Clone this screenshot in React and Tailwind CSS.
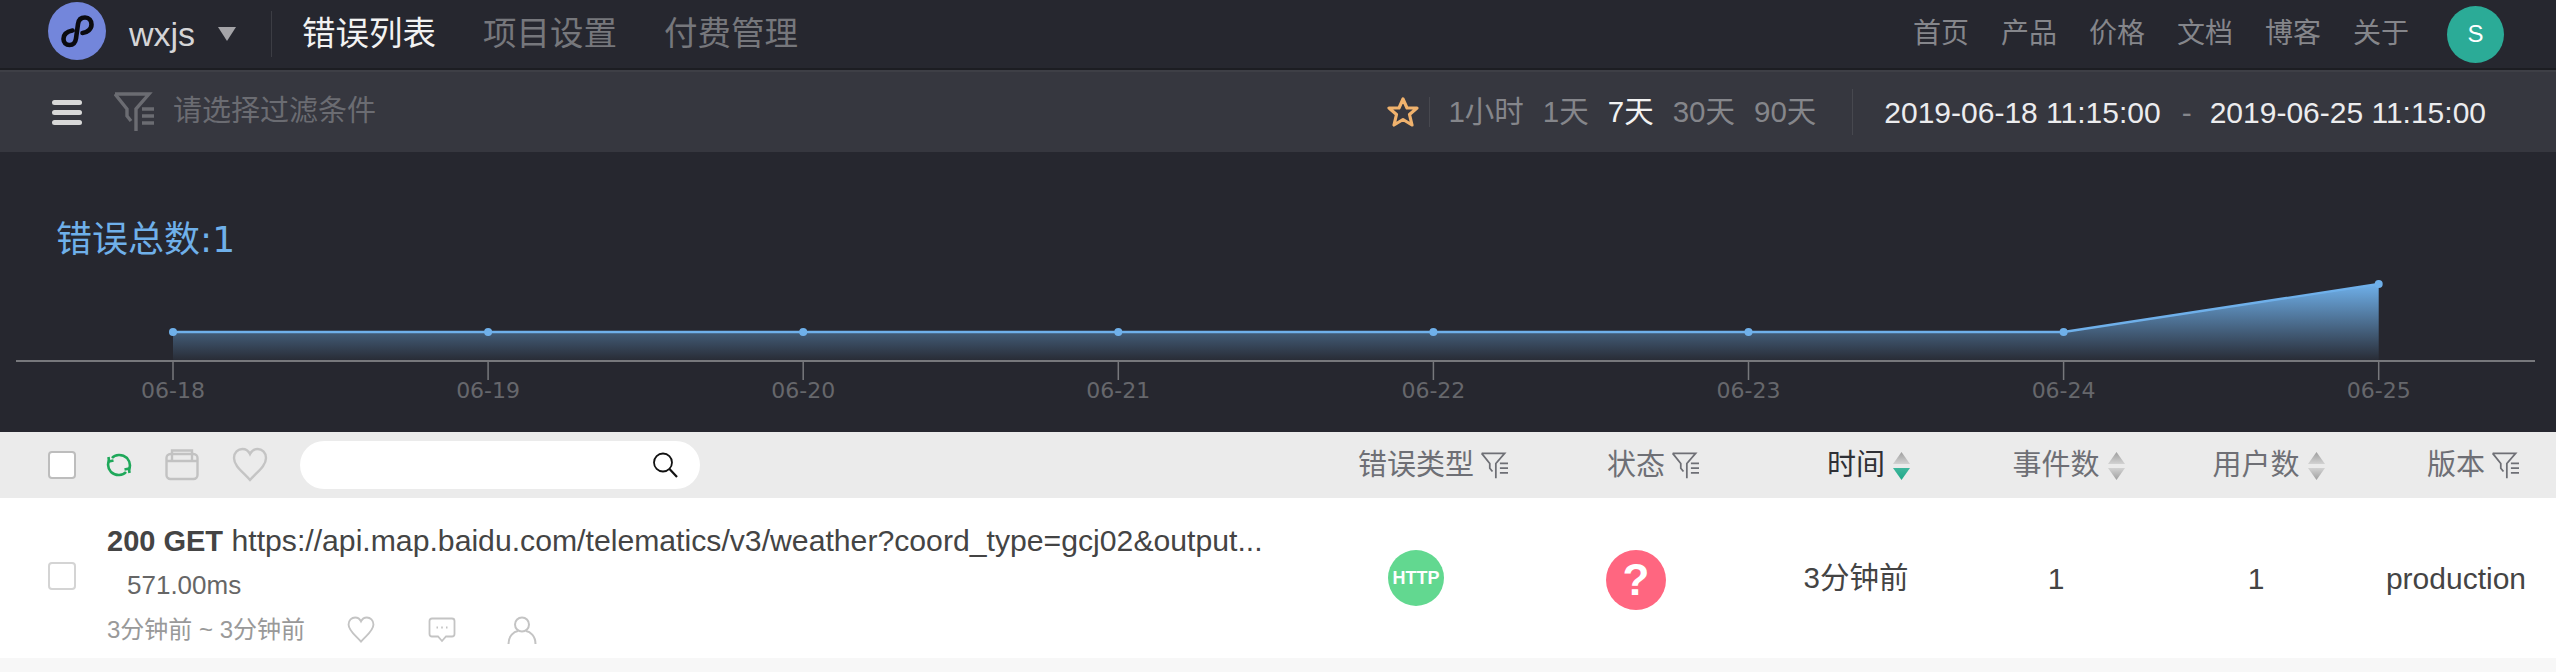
import React from "react";

const SANS = "font-['Liberation_Sans','Noto_Sans_CJK_SC',sans-serif]";
const TICKS = ["06-18", "06-19", "06-20", "06-21", "06-22", "06-23", "06-24", "06-25"];
const tickX = (i) => 173 + i * 315.1;

function MiniLogo() {
  return (
    <svg width="58" height="58" viewBox="0 0 58 58" className="block">
      <circle cx="29" cy="29" r="29" fill="#7386db" />
      <path d="M24.5 28.5 C19 29.5 15.5 32.5 15.5 37 C15.5 40.5 18 43 21.5 43 C25.5 43 27.5 40 28 36.5 L30 22 C30.5 18 33 15.5 37 15.5 C41 15.5 43.5 18.5 43.5 22.5 C43.5 27 39.5 30.5 34.5 31" fill="none" stroke="#0b0b10" strokeWidth="4.6" strokeLinecap="round" />
    </svg>
  );
}

function FilterIcon({ size = 40, color = "#6b6c72", stroke = 3.4 }) {
  return (
    <svg width={size} height={size} viewBox="0 0 40 40" className="block" fill="none" stroke={color} strokeWidth={stroke}>
      <path d="M1 2 H35 L22 17 V39" />
      <path d="M1 2 L13 17 V24 L17 29" />
      <path d="M28 17 H40 M28 24 H40 M28 31 H40" />
    </svg>
  );
}

function SortIcon({ active }) {
  const id = active ? "sortActive" : "sortIdle";
  return (
    <svg width="19" height="28" viewBox="0 0 19 28" className="block">
      <defs>
        <linearGradient id={`${id}Up`} x1="0" y1="0" x2="0" y2="1">
          <stop offset="0" stopColor="#9f9f9f" />
          <stop offset="1" stopColor="#d2d2d2" />
        </linearGradient>
        <linearGradient id={`${id}Down`} x1="0" y1="0" x2="0" y2="1">
          <stop offset="0" stopColor={active ? "#3fb69c" : "#d2d2d2"} />
          <stop offset="1" stopColor={active ? "#1fa888" : "#9f9f9f"} />
        </linearGradient>
      </defs>
      <path d="M9.5 0 L18 12 H1 Z" fill={`url(#${id}Up)`} />
      <path d="M9.5 28 L18 16 H1 Z" fill={`url(#${id}Down)`} />
    </svg>
  );
}

function Heart({ size, color = "#c4c4c4" }) {
  return (
    <svg width={size} height={size} viewBox="0 0 36 36" className="block" fill="none" stroke={color} strokeWidth="2.4">
      <path d="M18 33 C11 25 2 19 2 11 C2 5.5 6 2 10.5 2 C13.5 2 16.5 4 18 7 C19.5 4 22.5 2 25.5 2 C30 2 34 5.5 34 11 C34 19 25 25 18 33 Z" />
    </svg>
  );
}

function HeaderCell({ label, filter, sort, active, className = "" }) {
  return (
    <div className={`w-[200px] flex justify-center ${className}`}>
      <div className={`relative text-[29px] leading-none ${active ? "text-[#2f3036]" : "text-[#6e6f75]"}`}>
        {label}
        {filter && (
          <span className="absolute left-full top-[1px] ml-[7px]">
            <FilterIcon size={27} color="#6e6f75" stroke={2.6} />
          </span>
        )}
        {sort && (
          <span className="absolute left-full top-[1px] ml-[7px]">
            <SortIcon active={active} />
          </span>
        )}
      </div>
    </div>
  );
}

function TopNav() {
  return (
    <div className="h-[68px] bg-[#26272f] flex items-center">
      <div className="ml-[48px] -mt-[6px]"><MiniLogo /></div>
      <span className="ml-[23px] text-[34px] text-[#d5d5d7]">wxjs</span>
      <svg width="18" height="14" viewBox="0 0 18 14" className="ml-[23px]"><path d="M0 0 H18 L9 14 Z" fill="#a4a4a8" /></svg>
      <div className="ml-[35px] w-px h-[46px] bg-[#3c3d44]" />
      <span className="ml-[30px] text-[33.5px] text-[#f2f2f2]">错误列表</span>
      <span className="ml-[47px] text-[33.5px] text-[#76777c]">项目设置</span>
      <span className="ml-[47px] text-[33.5px] text-[#76777c]">付费管理</span>
      <div className="ml-auto flex items-center gap-[32px] text-[28px] text-[#85868b]">
        <span>首页</span>
        <span>产品</span>
        <span>价格</span>
        <span>文档</span>
        <span>博客</span>
        <span>关于</span>
      </div>
      <div className="ml-[38px] mr-[52px] w-[57px] h-[57px] rounded-full bg-[#2bab97] text-white text-[24px] flex items-center justify-center">S</div>
    </div>
  );
}

function FilterBar() {
  return (
    <div className="h-[82px] border-t-2 border-[#3e3f46] bg-[#36373f] flex items-center">
      <div className="ml-[52px] w-[30px] flex flex-col gap-[5px]">
        <div className="h-[5px] rounded-full bg-[#d8d8d8]" />
        <div className="h-[5px] rounded-full bg-[#d8d8d8]" />
        <div className="h-[5px] rounded-full bg-[#d8d8d8]" />
      </div>
      <div className="ml-[32px]"><FilterIcon /></div>
      <span className="ml-[19px] text-[29px] text-[#6b6c72]">请选择过滤条件</span>
      <svg width="32" height="32" viewBox="0 0 32 32" className="ml-auto" fill="none" stroke="#f0b26d" strokeWidth="3.2">
        <path d="M16 3 L20 12 H30 L22.5 18.5 L25 29 L16 23.5 L7 29 L9.5 18.5 L2 12 H12 Z" strokeLinejoin="round" />
      </svg>
      <div className="ml-[10px] w-px h-[30px] bg-[#47484f]" />
      <div className="ml-[18px] flex items-center gap-[19px] text-[29.5px] text-[#85868b]">
        <span>1小时</span>
        <span>1天</span>
        <span className="text-[#f2f2f2]">7天</span>
        <span>30天</span>
        <span>90天</span>
      </div>
      <div className="ml-[36px] w-px h-[46px] bg-[#47484f]" />
      <div className="ml-[31px] mr-[70px] flex items-center text-[30px] text-[#ececee]">
        <span>2019-06-18 11:15:00</span>
        <span className="ml-[21px] mr-[18px] text-[#85868b]">-</span>
        <span>2019-06-25 11:15:00</span>
      </div>
    </div>
  );
}

function Chart() {
  const points = TICKS.map((_, i) => [tickX(i), i === 7 ? 132 : 180]);
  const line = points.map((p) => p.join(",")).join(" ");
  return (
    <div className="h-[280px] bg-[#26272f]">
      <svg width="2556" height="280" viewBox="0 0 2556 280" className="block">
        <defs>
          <linearGradient id="areaFill" gradientUnits="userSpaceOnUse" x1="0" y1="132" x2="0" y2="208">
            <stop offset="0" stopColor="#6fb0ea" />
            <stop offset="1" stopColor="#6fb0ea" stopOpacity="0.04" />
          </linearGradient>
        </defs>
        <text x="56" y="100" fontSize="36" fill="#6fb0ea" fontFamily="'DejaVu Sans','Noto Sans CJK SC',sans-serif">错误总数:1</text>
        <polygon points={`${tickX(0)},208 ${line} ${tickX(7)},208`} fill="url(#areaFill)" />
        <polyline points={line} fill="none" stroke="#6fb0ea" strokeWidth="2.4" />
        {points.map(([x, y]) => (
          <circle key={x} cx={x} cy={y} r="4" fill="#6fb0ea" />
        ))}
        <line x1="16" y1="209" x2="2535" y2="209" stroke="#77787c" strokeWidth="2" />
        {TICKS.map((t, i) => (
          <g key={t}>
            <line x1={tickX(i)} y1="209" x2={tickX(i)} y2="228" stroke="#77787c" strokeWidth="1.5" />
            <text x={tickX(i)} y="246" textAnchor="middle" fontSize="22" fill="#66676c" fontFamily="'DejaVu Sans',sans-serif">{t}</text>
          </g>
        ))}
      </svg>
    </div>
  );
}

function TableHeader() {
  return (
    <div className="h-[66px] bg-[#ebebeb] flex items-center">
      <div className="flex-1 flex items-center">
        <div className="ml-[48px] w-[28px] h-[28px] rounded-[4px] bg-white border-2 border-[#bdbdbd]" />
        <svg width="26" height="26" viewBox="0 0 26 26" className="ml-[30px]" fill="none" stroke="#1fa85a" strokeWidth="2.6">
          <path d="M6 6 C9 2.5 16 1.5 21 6 C24 9.5 24.5 14 23 17.5" />
          <path d="M20 20 C17 23.5 10 24.5 5 20 C2 16.5 1.5 12 3 8.5" />
          <path d="M2.5 5 L3 9.5 L7.5 8.5 M23.5 21 L23 16.5 L18.5 17.5" />
        </svg>
        <svg width="34" height="32" viewBox="0 0 34 32" className="ml-[33px]" fill="none" stroke="#c2c2c2" strokeWidth="2.4">
          <rect x="1.5" y="5" width="31" height="25" rx="4" />
          <path d="M7 11 V1.5 H27 V11 M1.5 12 H32.5" />
        </svg>
        <div className="ml-[33px]"><Heart size={36} /></div>
        <div className="ml-[32px] w-[400px] h-[48px] rounded-full bg-white flex items-center justify-end pr-[22px]">
          <svg width="26" height="26" viewBox="0 0 26 26" fill="none" stroke="#111" strokeWidth="1.8">
            <circle cx="11" cy="10.5" r="9" />
            <path d="M17.5 17 L25 25" strokeWidth="2.2" />
          </svg>
        </div>
      </div>
      <HeaderCell label="错误类型" filter className="mr-5" />
      <HeaderCell label="状态" filter className="mr-5" />
      <HeaderCell label="时间" sort active />
      <HeaderCell label="事件数" sort />
      <HeaderCell label="用户数" sort />
      <HeaderCell label="版本" filter />
    </div>
  );
}

function ErrorRow() {
  return (
    <div className="h-[160px] bg-white flex items-center">
      <div className="flex-1 min-w-0 flex items-center">
        <div className="ml-[48px] -mt-[4px] w-[28px] h-[28px] rounded-[4px] border-2 border-[#d4d4d4] shrink-0" />
        <div className="ml-[31px] mt-[12px] w-[1160px]">
          <div className="text-[30.2px] leading-[38px] text-[#444] truncate">
            <b className="font-bold text-[29px]">200 GET</b> https://api.map.baidu.com/telematics/v3/weather?coord_type=gcj02&amp;output...
          </div>
          <div className="mt-[6px] ml-[20px] text-[26px] leading-[38px] text-[#666]">571.00ms</div>
          <div className="mt-[10px] flex items-center text-[24px] leading-[32px] text-[#999]">
            <span>3分钟前 ~ 3分钟前</span>
            <div className="ml-[42px]"><Heart size={28} /></div>
            <svg width="28" height="26" viewBox="0 0 28 26" className="ml-[53px]" fill="none" stroke="#c4c4c4" strokeWidth="1.8">
              <path d="M4 1.5 H24 Q26.5 1.5 26.5 4 V17 Q26.5 19.5 24 19.5 H18 L14 24 L10 19.5 H4 Q1.5 19.5 1.5 17 V4 Q1.5 1.5 4 1.5 Z" />
              <path d="M8.5 10.5 H10 M13.2 10.5 H14.8 M18 10.5 H19.5" strokeWidth="2" />
            </svg>
            <svg width="30" height="28" viewBox="0 0 30 28" className="ml-[51px]" fill="none" stroke="#c4c4c4" strokeWidth="2">
              <circle cx="15" cy="8.5" r="7" />
              <path d="M1.5 28 C1.5 20 7 15.5 11 15 M28.5 28 C28.5 20 23 15.5 19 15" />
            </svg>
          </div>
        </div>
      </div>
      <div className="w-[200px] mr-5 flex justify-center">
        <div className="w-[56px] h-[56px] rounded-full bg-[#62d890] text-white text-[18px] font-bold flex items-center justify-center">HTTP</div>
      </div>
      <div className="w-[200px] mr-5 flex justify-center">
        <div className="w-[60px] h-[60px] mt-[4px] rounded-full bg-[#ff6680] text-white text-[44px] font-bold flex items-center justify-center">?</div>
      </div>
      <div className="w-[200px] text-center text-[29.5px] text-[#444]">3分钟前</div>
      <div className="w-[200px] text-center text-[30px] text-[#444]">1</div>
      <div className="w-[200px] text-center text-[30px] text-[#444]">1</div>
      <div className="w-[200px] text-center text-[30px] text-[#444]">production</div>
    </div>
  );
}

export default function App() {
  return (
    <div className={`${SANS} w-[2556px] h-[672px] overflow-hidden bg-[#f7f7f7]`}>
      <div className="bg-[#1c1d22] h-[70px]"><TopNav /></div>
      <FilterBar />
      <Chart />
      <TableHeader />
      <ErrorRow />
    </div>
  );
}
